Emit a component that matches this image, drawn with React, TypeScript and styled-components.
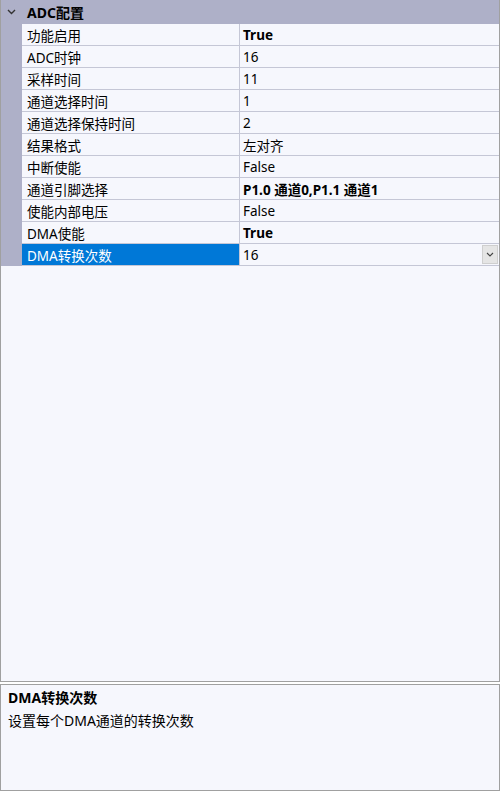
import styled, { createGlobalStyle } from "styled-components";

type PropRow = {
  name: string;
  value: string;
  bold?: boolean;
  selected?: boolean;
};

const rows: PropRow[] = [
  { name: "功能启用", value: "True", bold: true },
  { name: "ADC时钟", value: "16" },
  { name: "采样时间", value: "11" },
  { name: "通道选择时间", value: "1" },
  { name: "通道选择保持时间", value: "2" },
  { name: "结果格式", value: "左对齐" },
  { name: "中断使能", value: "False" },
  { name: "通道引脚选择", value: "P1.0 通道0,P1.1 通道1", bold: true },
  { name: "使能内部电压", value: "False" },
  { name: "DMA使能", value: "True", bold: true },
  { name: "DMA转换次数", value: "16", selected: true },
];

const GlobalStyle = createGlobalStyle`
  html, body {
    margin: 0;
    padding: 0;
    background: #ffffff;
  }
  body {
    font-family: "Noto Sans", "Noto Sans CJK SC", sans-serif;
    font-size: 13.5px;
    color: #000000;
  }
`;

const Page = styled.div`
  width: 500px;
  height: 791px;
  display: flex;
  flex-direction: column;
  gap: 2px;
  box-sizing: border-box;
`;

const Grid = styled.div`
  height: 682px;
  box-sizing: border-box;
  background: #f6f7fd;
  border: 1px solid #a0a0a0;
  border-top: none;
  display: flex;
  flex-direction: column;
`;

const Category = styled.div`
  height: 24px;
  background: #aeb0c8;
  display: flex;
  align-items: center;
  font-weight: bold;
  font-size: 14px;
`;

const Chevron = styled.span`
  width: 26px;
  display: flex;
  justify-content: center;
  padding-right: 5px;
  box-sizing: border-box;
`;

const Row = styled.div`
  height: 22px;
  display: grid;
  grid-template-columns: 21px 218px 1fr;
`;

const Gutter = styled.div`
  background: #aeb0c8;
`;

const NameCell = styled.div<{ $selected?: boolean }>`
  display: flex;
  align-items: center;
  padding-left: 5px;
  box-sizing: border-box;
  border-bottom: 1px solid #c5c7d6;
  border-right: 1px solid #c5c7d6;
  background: ${(p) => (p.$selected ? "#0078d7" : "transparent")};
  color: ${(p) => (p.$selected ? "#ffffff" : "#000000")};
  white-space: nowrap;
  overflow: hidden;
`;

const ValueCell = styled.div<{ $bold?: boolean }>`
  display: flex;
  align-items: center;
  padding-left: 3px;
  box-sizing: border-box;
  border-bottom: 1px solid #c5c7d6;
  font-weight: ${(p) => (p.$bold ? "bold" : "normal")};
  white-space: nowrap;
`;

const ValueText = styled.span`
  flex: 1;
`;

const DropButton = styled.div`
  width: 16px;
  height: 19px;
  margin-right: 1px;
  box-sizing: border-box;
  background: #e5e5e5;
  border: 1px solid #cfcfcf;
  display: flex;
  align-items: center;
  justify-content: center;
`;

const Desc = styled.div`
  flex: 1;
  box-sizing: border-box;
  background: #f6f7fd;
  border: 1px solid #a0a0a0;
  padding: 3px 7px;
`;

const DescTitle = styled.div`
  font-weight: bold;
  font-size: 14px;
  line-height: 20px;
`;

const DescText = styled.div`
  font-size: 14px;
  line-height: 26px;
`;

const App = () => {
  return (
    <>
      <GlobalStyle />
      <Page>
        <Grid>
          <Category>
            <Chevron>
              <svg width="9" height="6" viewBox="0 0 9 6">
                <path d="M1 1 L4.5 4.5 L8 1" fill="none" stroke="#333" strokeWidth="1.4" />
              </svg>
            </Chevron>
            ADC配置
          </Category>
          {rows.map((r) => (
            <Row key={r.name}>
              <Gutter />
              <NameCell $selected={r.selected}>{r.name}</NameCell>
              <ValueCell $bold={r.bold}>
                <ValueText>{r.value}</ValueText>
                {r.selected && (
                  <DropButton>
                    <svg width="8" height="5" viewBox="0 0 8 5">
                      <path d="M1 1 L4 4 L7 1" fill="none" stroke="#444" strokeWidth="1.1" />
                    </svg>
                  </DropButton>
                )}
              </ValueCell>
            </Row>
          ))}
        </Grid>
        <Desc>
          <DescTitle>DMA转换次数</DescTitle>
          <DescText>设置每个DMA通道的转换次数</DescText>
        </Desc>
      </Page>
    </>
  );
};

export default App;
